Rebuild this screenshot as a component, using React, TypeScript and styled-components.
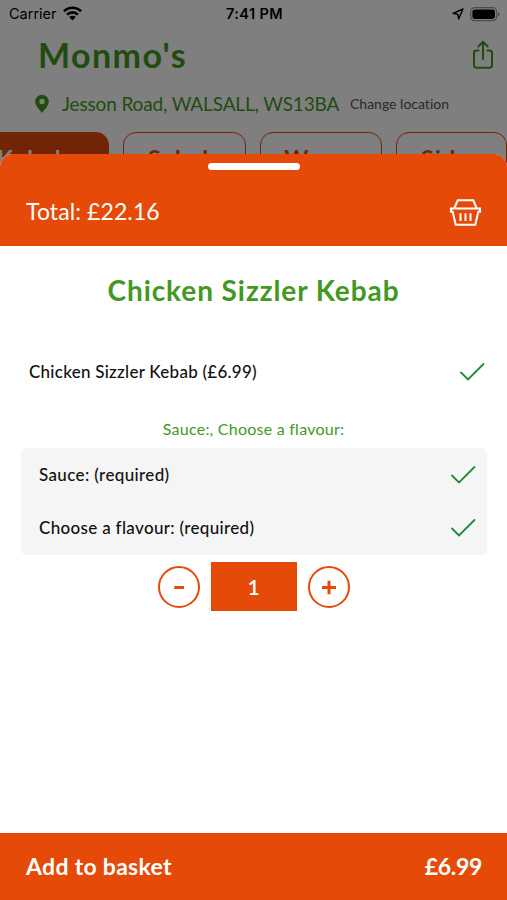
import React from "react";
import styled, { createGlobalStyle } from "styled-components";

const ORANGE = "#e54a09";
const GREEN = "#43981f";

const GlobalStyle = createGlobalStyle`
  html, body { margin: 0; padding: 0; background: #fff; }
  * { box-sizing: border-box; }
  button { font: inherit; color: inherit; background: none; border: 0; padding: 0; margin: 0; }
`;

const Screen = styled.main`
  position: relative;
  width: 507px;
  height: 900px;
  overflow: hidden;
  background: #fff;
  color: #111;
  font-family: Lato, "Liberation Sans", sans-serif;
  font-variant-ligatures: none;
`;

const Label = styled.span<{
  $size: number;
  $weight?: number;
  $spacing?: number;
  $color?: string;
}>`
  margin: 0;
  font-size: ${(p) => p.$size}px;
  font-weight: ${(p) => p.$weight ?? 400};
  letter-spacing: ${(p) => p.$spacing ?? 0}px;
  color: ${(p) => p.$color ?? "inherit"};
  line-height: 1.2;
  white-space: nowrap;
`;

const StatusBar = styled.header`
  display: grid;
  grid-template-columns: 1fr auto 1fr;
  align-items: center;
  height: 28px;
  padding: 0 7px 0 9px;
  color: #000;
  font-family: Inter, "Liberation Sans", sans-serif;
`;

const StatusGroup = styled.div<{ $end?: boolean }>`
  display: flex;
  align-items: center;
  justify-content: ${(p) => (p.$end ? "flex-end" : "flex-start")};
  gap: 6px;
`;

const TitleRow = styled.div`
  display: flex;
  align-items: center;
  justify-content: space-between;
  height: 54px;
  padding: 0 13px 0 38px;
`;

const LocationRow = styled.div`
  display: flex;
  align-items: center;
  height: 44px;
  padding-left: 34px;
`;

const Address = styled.div`
  flex: none;
  width: 300px;
  padding-left: 12px;
`;

const Chips = styled.nav`
  display: flex;
  gap: 14px;
  margin: 6px 0 0 -31px;
`;

const Chip = styled.div<{ $width: number; $active?: boolean }>`
  display: flex;
  flex: none;
  justify-content: center;
  width: ${(p) => p.$width}px;
  height: 52px;
  padding-top: 12px;
  border: 1.5px solid ${ORANGE};
  border-radius: 13px;
  background: ${(p) => (p.$active ? ORANGE : "transparent")};
  color: ${(p) => (p.$active ? "#fff" : ORANGE)};
`;

const Backdrop = styled.div`
  position: absolute;
  inset: 0;
  background: rgba(0, 0, 0, 0.5);
`;

const Sheet = styled.section`
  position: absolute;
  inset: 154px 0 0;
  display: flex;
  flex-direction: column;
  border-radius: 13px 13px 0 0;
  overflow: hidden;
  background: #fff;
`;

const SheetHeader = styled.div`
  display: flex;
  flex-direction: column;
  align-items: center;
  height: 92px;
  padding-top: 9px;
  background: ${ORANGE};
  color: #fff;
`;

const Handle = styled.div`
  flex: none;
  width: 92px;
  height: 7px;
  border-radius: 4px;
  background: #fff;
`;

const TotalRow = styled.div`
  display: flex;
  flex: none;
  align-items: center;
  justify-content: space-between;
  width: 100%;
  height: 84px;
  padding: 0 26px;
`;

const Heading = styled.div`
  display: flex;
  justify-content: center;
  padding-top: 28px;
  height: 99px;
`;

const OptionRow = styled.div<{ $inset: number; $height: number }>`
  display: flex;
  align-items: center;
  justify-content: space-between;
  height: ${(p) => p.$height}px;
  padding: 0 ${(p) => p.$inset - 7}px 0 ${(p) => p.$inset}px;
`;

const GroupTitle = styled.div`
  display: flex;
  align-items: center;
  justify-content: center;
  height: 38px;
  margin: 11px 0 0;
`;

const OptionCard = styled.div`
  margin: 0 20px 0 21px;
  border-radius: 6px;
  background: #f5f5f5;
`;

const Stepper = styled.div`
  display: flex;
  align-items: center;
  justify-content: center;
  gap: 11px;
  height: 49px;
  margin-top: 7px;
`;

const RoundButton = styled.button`
  display: flex;
  align-items: center;
  justify-content: center;
  width: 42px;
  height: 42px;
  border: 2px solid ${ORANGE};
  border-radius: 50%;
`;

const Quantity = styled.div`
  display: flex;
  align-items: center;
  justify-content: center;
  width: 86px;
  height: 49px;
  padding-top: 1px;
  background: ${ORANGE};
  color: #fff;
`;

const Footer = styled.button`
  display: flex;
  align-items: center;
  justify-content: space-between;
  height: 67px;
  margin-top: auto;
  padding: 0 25px 0 26px;
  background: ${ORANGE};
  color: #fff;
`;

const Check = () => (
  <svg width="26" height="20" viewBox="0 0 26 20" fill="none" stroke="#1f8a35" strokeWidth="1.8" strokeLinecap="round">
    <path d="M2 10.5 9 17.5 24.5 2" />
  </svg>
);

const Wifi = () => (
  <svg width="19" height="15" viewBox="0 0 19 15">
    <g fill="none" stroke="#000" strokeWidth="2.7">
      <path d="M1 5.3a12 12 0 0 1 17 0" />
      <path d="M4.1 8.6a7.6 7.6 0 0 1 10.8 0" />
    </g>
    <path d="M9.5 14.4 6.2 11a4.7 4.7 0 0 1 6.6 0z" />
  </svg>
);

const Arrow = () => (
  <svg width="12" height="12" viewBox="0 0 12 12" fill="none" stroke="#000" strokeWidth="1.4" strokeLinejoin="round">
    <path d="M11 1 6.6 11 5.8 6.2 1 5.4z" />
  </svg>
);

const Battery = () => (
  <svg width="30" height="15" viewBox="0 0 30 15">
    <rect x="0.7" y="0.7" width="26" height="13" rx="4" fill="none" stroke="#000" strokeOpacity="0.4" strokeWidth="1.2" />
    <rect x="2.4" y="2.4" width="22.6" height="9.6" rx="2.4" />
    <path d="M28 5v4.5q1.5-.7 1.5-2.2T28 5" fillOpacity="0.45" />
  </svg>
);

const Share = () => (
  <svg width="22" height="30" viewBox="0 0 22 30" fill="none" stroke={GREEN} strokeWidth="2" strokeLinecap="round" strokeLinejoin="round">
    <path d="M6.5 10.5H4.3Q2 10.5 2 12.8v12.4q0 2.6 2.6 2.6h12.8q2.6 0 2.6-2.6V12.8q0-2.3-2.3-2.3h-2.2" />
    <path d="M11 19V2M6.3 6.5 11 1.8l4.7 4.7" />
  </svg>
);

const Pin = () => (
  <svg width="16" height="20" viewBox="0 0 16 20" fill={GREEN}>
    <path fillRule="evenodd" d="M8 .8a6.8 6.8 0 0 1 6.8 6.8c0 4.6-5.4 9.3-6.8 11.4C6.6 16.9 1.2 12.2 1.2 7.6A6.8 6.8 0 0 1 8 .8zm0 3.900a2.700 2.700 0 1 0 0 5.400 2.700 2.700 0 0 0 0-5.400z" />
  </svg>
);

const Basket = () => (
  <svg width="31" height="27" viewBox="0 0 31 27" fill="none" stroke="#fff" strokeWidth="2">
    <path d="M4.2 9.5 7.7 1.3h15.6l3.5 8.2" />
    <path d="M1 9.6h29v3.2h-1.700L25.300 25.700H5.700L2.700 12.800H1z" />
    <path d="M10.500 14.300v7.800M15.500 14.300v7.800M20.500 14.300v7.800" />
  </svg>
);

const Sign = ({ plus }: { plus?: boolean }) => (
  <svg width="16" height="16" viewBox="0 0 16 16" stroke={ORANGE} strokeWidth="3">
    {plus ? <path d="M1 8.500h14M8 1.800v13.400" /> : <path d="M3.300 8.500h9.700" />}
  </svg>
);

const OPTIONS = [
  { name: "Sauce: (required)", spacing: 0.37 },
  { name: "Choose a flavour: (required)", spacing: 0.33 },
];

const CATEGORIES = [
  { name: "Kebabs", width: 140, active: true },
  { name: "Salads", width: 123 },
  { name: "Wraps", width: 122 },
  { name: "Sides", width: 111 },
];

export default function App() {
  return (
    <>
      <GlobalStyle />
      <Screen>
        <StatusBar>
          <StatusGroup>
            <Label $size={14.5}>Carrier</Label>
            <Wifi />
          </StatusGroup>
          <Label $size={14.5} $weight={600} $spacing={0.4}>7:41 PM</Label>
          <StatusGroup $end>
            <Arrow />
            <Battery />
          </StatusGroup>
        </StatusBar>
        <TitleRow>
          <Label as="h1" $size={34} $weight={700} $spacing={1.4} $color={GREEN}>Monmo's</Label>
          <Share />
        </TitleRow>
        <LocationRow>
          <Pin />
          <Address>
            <Label $size={19} $spacing={-0.14} $color={GREEN}>Jesson Road, WALSALL, WS13BA</Label>
          </Address>
          <Label $size={14} $color="#555">Change location</Label>
        </LocationRow>
        <Chips>
          {CATEGORIES.map((c) => (
            <Chip key={c.name} $width={c.width} $active={c.active}>
              <Label $size={23} $weight={700} $spacing={1.4}>{c.name}</Label>
            </Chip>
          ))}
        </Chips>
        <Backdrop />
        <Sheet>
          <SheetHeader>
            <Handle />
            <TotalRow>
              <Label $size={23} $spacing={0.1}>Total: £22.16</Label>
              <Basket />
            </TotalRow>
          </SheetHeader>
          <Heading>
            <Label as="h2" $size={28} $weight={700} $spacing={0.93} $color={GREEN}>Chicken Sizzler Kebab</Label>
          </Heading>
          <OptionRow $inset={29} $height={54}>
            <Label $size={17} $weight={500} $spacing={0.26}>Chicken Sizzler Kebab (£6.99)</Label>
            <Check />
          </OptionRow>
          <GroupTitle>
            <Label $size={16} $spacing={0.24} $color={GREEN}>Sauce:, Choose a flavour:</Label>
          </GroupTitle>
          <OptionCard>
            {OPTIONS.map((o) => (
              <OptionRow key={o.name} $inset={18} $height={53.5}>
                <Label $size={17} $weight={500} $spacing={o.spacing}>{o.name}</Label>
                <Check />
              </OptionRow>
            ))}
          </OptionCard>
          <Stepper>
            <RoundButton aria-label="Decrease"><Sign /></RoundButton>
            <Quantity><Label $size={21} $weight={600}>1</Label></Quantity>
            <RoundButton aria-label="Increase"><Sign plus /></RoundButton>
          </Stepper>
          <Footer>
            <Label $size={23} $weight={700} $spacing={0.3}>Add to basket</Label>
            <Label $size={23} $weight={700} $spacing={-0.3}>£6.99</Label>
          </Footer>
        </Sheet>
      </Screen>
    </>
  );
}
